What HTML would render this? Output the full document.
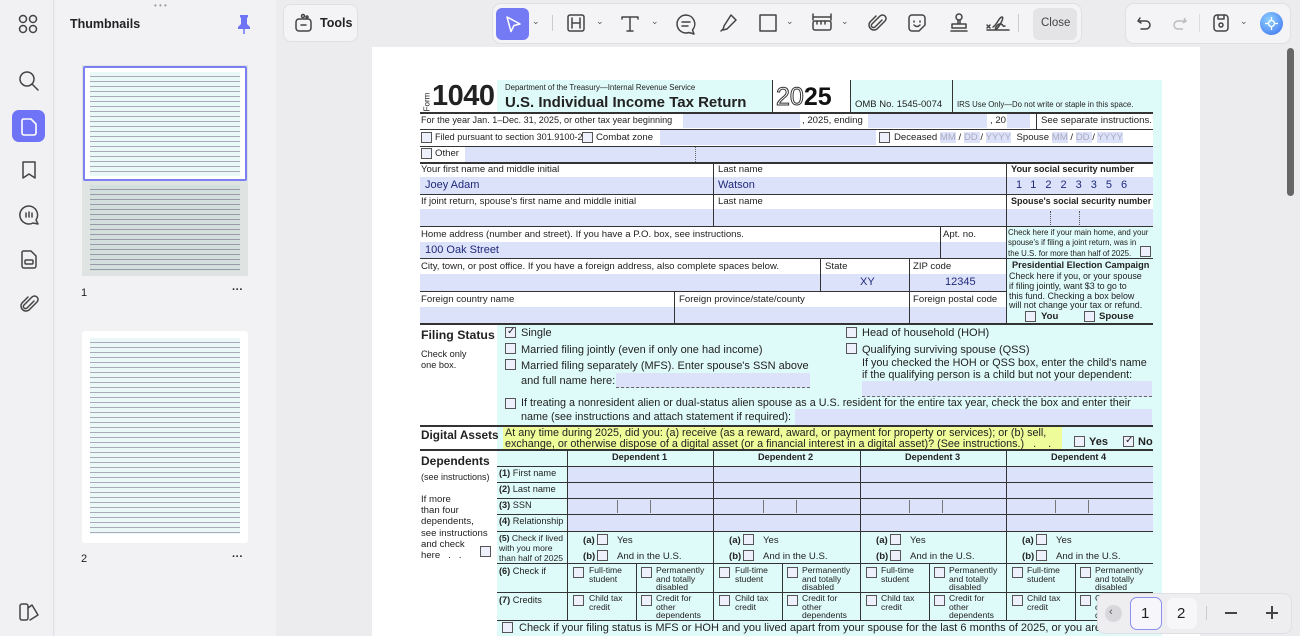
<!DOCTYPE html>
<html><head><meta charset="utf-8"><style>
*{margin:0;padding:0;box-sizing:border-box}
body{width:1300px;height:636px;overflow:hidden;background:#ececef;font-family:"Liberation Sans",Arial,sans-serif;position:relative;color:#222}
div,span{position:absolute}
.t{white-space:nowrap;font-size:9.6px;line-height:1;color:#222}
.b{font-weight:bold}
.f{background:#dde2fb}
.cy{background:#dffbf9}
.h{height:1px;background:#333}
.v{width:1px;background:#333}
.cb{width:11px;height:11px;border:1px solid #555;background:#eef0fb}
.ck::after{content:"✓";position:absolute;left:1px;top:-2px;font-size:10px;color:#222}
.val{font-size:11px;color:#1f2a7a;white-space:nowrap;line-height:1}
.fs{font-size:11px;white-space:nowrap;line-height:1}
.ic{stroke:#444;fill:none;stroke-width:1.5;stroke-linecap:round;stroke-linejoin:round}
</style></head><body>

<!-- left rail -->
<div style="left:0;top:0;width:54px;height:636px;background:#f1f1f3;border-right:1px solid #e2e2e6"></div>
<svg style="position:absolute;left:18px;top:14px" width="20" height="20" class="ic"><circle cx="5" cy="5" r="3.5"/><circle cx="15" cy="5" r="3.5"/><circle cx="5" cy="15" r="3.5"/><circle cx="15" cy="15" r="3.5"/></svg>
<svg style="position:absolute;left:18px;top:70px" width="22" height="22" class="ic"><circle cx="9" cy="9" r="7"/><path d="M14 14l6 6"/></svg>
<div style="left:12px;top:110px;width:33px;height:32px;background:#6f73f5;border-radius:7px"></div>
<svg style="position:absolute;left:19px;top:116px" width="20" height="20" fill="none" stroke="#fff" stroke-width="1.6" stroke-linejoin="round"><path d="M4 3h8l5 5v9a2 2 0 0 1-2 2H5a2 2 0 0 1-2-2V5a2 2 0 0 1 1-2z"/></svg>
<svg style="position:absolute;left:19px;top:160px" width="20" height="20" class="ic"><path d="M4 2h12v16l-6-4-6 4z"/></svg>
<svg style="position:absolute;left:17px;top:203px" width="24" height="24" class="ic"><path d="M12 3a9 9 0 1 0 4 17l5 1-2-4A9 9 0 0 0 12 3z"/><path d="M9 10v4M12 9v5M15 10v4"/></svg>
<svg style="position:absolute;left:19px;top:249px" width="20" height="20" class="ic"><path d="M4 2h8l5 5v10a2 2 0 0 1-2 2H5a2 2 0 0 1-2-2V3z"/><rect x="6" y="11" width="8" height="4" rx="1"/></svg>
<svg style="position:absolute;left:19px;top:294px" width="20" height="20" class="ic"><path d="M15 7l-7 7a2 2 0 0 1-3-3l8-8a3.5 3.5 0 0 1 5 5l-8 8a5 5 0 0 1-7-7l6-6"/></svg>
<svg style="position:absolute;left:18px;top:602px" width="22" height="20" class="ic"><rect x="2" y="2" width="8" height="16" rx="2"/><path d="M10 6l4-3 6 10-8 5"/></svg>

<!-- thumbnails panel -->
<div style="left:55px;top:0;width:221px;height:636px;background:#f2f2f4"></div>
<div class="t" style="left:154px;top:2px;color:#999;font-size:8px">• • •</div>
<div class="t b" style="left:70px;top:18px;font-size:12.5px;color:#222">Thumbnails</div>
<svg style="position:absolute;left:237px;top:14px" width="14" height="20"><path d="M3 1h8v2l-1 1v6l3 3v2H1v-2l3-3V4L3 3z" fill="#6f73f5"/><path d="M7 15v5" stroke="#6f73f5" stroke-width="1.5"/></svg>
<div style="left:82px;top:65px;width:166px;height:211px;background:#dfe4e2"></div>
<div style="left:83px;top:66px;width:164px;height:115px;background:#fff;border:2px solid #7b7ff0;border-radius:2px"></div>
<div style="left:90px;top:72px;width:150px;height:104px;background:repeating-linear-gradient(#e8f9f7 0 4px,#aab 4px 5px)"></div>
<div style="left:90px;top:185px;width:150px;height:86px;background:repeating-linear-gradient(#d3dfdd 0 4px,#99a 4px 5px)"></div>
<div class="t" style="left:81px;top:288px;font-size:11px">1</div>
<div class="t b" style="left:232px;top:285px;font-size:11px">···</div>
<div style="left:82px;top:331px;width:166px;height:212px;background:#fff;border-radius:3px"></div>
<div style="left:90px;top:338px;width:150px;height:196px;background:repeating-linear-gradient(#eaf9f7 0 4px,#aab 4px 5px)"></div>
<div class="t" style="left:81px;top:554px;font-size:11px">2</div>
<div class="t b" style="left:232px;top:552px;font-size:11px">···</div>

<!-- toolbar -->
<div style="left:277px;top:0;width:1023px;height:47px;background:#ececef"></div>
<div style="left:283px;top:4px;width:75px;height:38px;background:#f4f4f6;border:1px solid #e0e0e4;border-radius:8px"></div>
<svg style="position:absolute;left:293px;top:13px" width="22" height="20" class="ic"><rect x="3" y="6" width="15" height="12" rx="3"/><path d="M8 12h5"/><circle cx="10" cy="3" r="1.5"/><circle cx="14" cy="4" r="1"/></svg>
<div class="t b" style="left:320px;top:17px;font-size:12.5px">Tools</div>

<div style="left:492px;top:3px;width:590px;height:41px;background:#f4f4f6;border:1px solid #e0e0e4;border-radius:9px"></div>
<div style="left:496px;top:8px;width:33px;height:32px;background:#7479f4;border-radius:6px"></div>
<svg style="position:absolute;left:503px;top:14px" width="20" height="20" fill="none" stroke="#fff" stroke-width="1.5" stroke-linejoin="round"><path d="M4 3l13 7-6 1.5-3 6z"/></svg>
<div class="t" style="left:532px;top:17px;font-size:9px;color:#555">⌄</div>
<div style="left:552px;top:15px;width:1px;height:16px;background:#ccc"></div>
<svg style="position:absolute;left:566px;top:13px" width="20" height="20" class="ic"><rect x="2" y="2" width="16" height="16" rx="2"/><path d="M6 5v10M14 5v10M6 10h8"/></svg>
<div class="t" style="left:596px;top:17px;font-size:9px;color:#555">⌄</div>
<svg style="position:absolute;left:620px;top:13px" width="20" height="20" class="ic"><path d="M2 4h16M10 4v14M7 18h6M2 4v2M18 4v2"/></svg>
<div class="t" style="left:651px;top:17px;font-size:9px;color:#555">⌄</div>
<svg style="position:absolute;left:675px;top:13px" width="22" height="22" class="ic"><path d="M11 2a9 9 0 1 0 3 17.5L19 21l-1.5-4A9 9 0 0 0 11 2z"/><path d="M7 9h8M7 13h6"/></svg>
<svg style="position:absolute;left:718px;top:13px" width="20" height="20" class="ic"><path d="M13 2l5 5-9 9-4 1 1-4z"/><path d="M3 18l2-2"/></svg>
<svg style="position:absolute;left:758px;top:13px" width="20" height="20" class="ic"><rect x="2" y="2" width="16" height="16"/></svg>
<div class="t" style="left:786px;top:17px;font-size:9px;color:#555">⌄</div>
<svg style="position:absolute;left:811px;top:12px" width="22" height="22" class="ic"><path d="M2 2v6M20 2v6M2 5h18"/><rect x="2" y="9" width="18" height="9" rx="2"/><path d="M6 9v3M10 9v3M14 9v3"/></svg>
<div class="t" style="left:841px;top:17px;font-size:9px;color:#555">⌄</div>
<svg style="position:absolute;left:867px;top:13px" width="20" height="20" class="ic"><path d="M15 7l-7 7a2 2 0 0 1-3-3l8-8a3.5 3.5 0 0 1 5 5l-8 8a5 5 0 0 1-7-7l6-6"/></svg>
<svg style="position:absolute;left:907px;top:13px" width="20" height="20" class="ic"><path d="M5 2h10a3 3 0 0 1 3 3v7l-6 6H5a3 3 0 0 1-3-3V5a3 3 0 0 1 3-3z"/><path d="M7 8v1M13 8v1M7 12q3 3 6 0"/></svg>
<svg style="position:absolute;left:948px;top:12px" width="22" height="22" class="ic"><circle cx="11" cy="5" r="3"/><path d="M10 8v4M12 8v4M4 12h14v4H4zM3 19h16"/></svg>
<svg style="position:absolute;left:985px;top:13px" width="26" height="20" class="ic"><path d="M2 12l3 3M5 12l-3 3M8 14c4-2 6-10 9-10s-4 12-6 12 2-6 5-5 1 3 4 2M2 17h22"/></svg>
<div style="left:1018px;top:14px;width:1px;height:18px;background:#ccc"></div>
<div style="left:1033px;top:8px;width:44px;height:32px;background:#e4e4e7;border-radius:6px"></div>
<div class="t" style="left:1041px;top:18px;font-size:11.5px;color:#444">Close</div>

<div style="left:1125px;top:3px;width:166px;height:41px;background:#f4f4f6;border:1px solid #e0e0e4;border-radius:9px"></div>
<svg style="position:absolute;left:1136px;top:15px" width="16" height="16" class="ic"><path d="M4 3L2 6l3 2M2 6h8a4 4 0 0 1 0 8H5"/></svg>
<svg style="position:absolute;left:1172px;top:15px" width="16" height="16" fill="none" stroke="#bbb" stroke-width="1.4"><path d="M12 3l2 3-3 2M14 6H6a4 4 0 0 0 0 8h5"/></svg>
<div style="left:1199px;top:14px;width:1px;height:18px;background:#ddd"></div>
<svg style="position:absolute;left:1211px;top:13px" width="20" height="20" class="ic"><rect x="3" y="2" width="14" height="16" rx="3"/><path d="M7 2v4h6V2"/><circle cx="10" cy="12" r="2"/></svg>
<div class="t" style="left:1240px;top:17px;font-size:9px;color:#555">⌄</div>
<div style="left:1260px;top:12px;width:23px;height:23px;border-radius:50%;background:radial-gradient(circle at 40% 35%,#8fd3ff,#3a6cf0)"></div>
<svg style="position:absolute;left:1264px;top:16px" width="15" height="15" fill="none" stroke="#fff" stroke-width="1.3"><circle cx="7.5" cy="7.5" r="3"/><path d="M7.5 1v3M7.5 11v3M1 7.5h3M11 7.5h3"/></svg>

<!-- scrollbar -->
<div style="left:1287px;top:48px;width:7px;height:148px;background:#666;border-radius:4px"></div>

<!-- page -->
<div style="left:372px;top:47px;width:828px;height:589px;background:#fff"></div>
<div class="cy" style="left:497px;top:80px;width:275px;height:32px"></div>
<div class="cy" style="left:850px;top:80px;width:312px;height:32px"></div>
<div class="cy" style="left:1153px;top:80px;width:9px;height:556px"></div>
<div class="cy" style="left:1006px;top:226px;width:147px;height:98px"></div>
<div class="cy" style="left:497px;top:324px;width:656px;height:312px"></div>

<!-- header -->
<div class="t" style="left:418px;top:98px;font-size:8px;transform:rotate(-90deg)">Form</div>
<div class="t b" style="left:432px;top:82px;font-size:29px;letter-spacing:-0.5px">1040</div>
<div class="t" style="left:505px;top:84px;font-size:7.8px">Department of the Treasury—Internal Revenue Service</div>
<div class="t b" style="left:505px;top:95px;font-size:15px">U.S. Individual Income Tax Return</div>
<div class="v" style="left:772px;top:80px;height:32px"></div>
<div class="t" style="left:776px;top:85px;font-size:25px;color:#fff;-webkit-text-stroke:1px #333">20<span style="position:static;color:#111;-webkit-text-stroke:0;font-weight:bold">25</span></div>
<div class="v" style="left:850px;top:80px;height:32px"></div>
<div class="t" style="left:855px;top:100px;font-size:9.5px">OMB No. 1545-0074</div>
<div class="v" style="left:952px;top:80px;height:32px"></div>
<div class="t" style="left:957px;top:101px;font-size:7.8px">IRS Use Only—Do not write or staple in this space.</div>
<div class="h" style="left:420px;top:112px;width:733px;height:2px"></div>

<!-- row tax year -->
<div class="t" style="left:421px;top:116px;font-size:9.1px">For the year Jan. 1–Dec. 31, 2025, or other tax year beginning</div>
<div class="f" style="left:683px;top:114px;width:117px;height:14px"></div>
<div class="t" style="left:802px;top:116px">, 2025, ending</div>
<div class="f" style="left:868px;top:114px;width:119px;height:14px"></div>
<div class="t" style="left:990px;top:116px">, 20</div>
<div class="f" style="left:1007px;top:114px;width:23px;height:14px"></div>
<div class="v" style="left:1036px;top:113px;height:16px"></div>
<div class="t" style="left:1041px;top:116px">See separate instructions.</div>
<div class="h" style="left:420px;top:129px;width:733px"></div>

<div class="cb" style="left:421px;top:132px"></div>
<div class="t" style="left:435px;top:133px;font-size:9.1px">Filed pursuant to section 301.9100-2</div>
<div class="cb" style="left:582px;top:132px"></div>
<div class="t" style="left:596px;top:133px">Combat zone</div>
<div class="f" style="left:660px;top:130px;width:216px;height:15px"></div>
<div class="cb" style="left:879px;top:132px"></div>
<div class="t" style="left:894px;top:133px">Deceased <span style="position:static;color:#aab;background:#dde2fb">MM</span> / <span style="position:static;color:#aab;background:#dde2fb"> DD </span> / <span style="position:static;color:#aab;background:#dde2fb">YYYY</span>&nbsp; Spouse <span style="position:static;color:#aab;background:#dde2fb">MM</span> / <span style="position:static;color:#aab;background:#dde2fb"> DD </span> / <span style="position:static;color:#aab;background:#dde2fb">YYYY</span></div>
<div class="h" style="left:420px;top:146px;width:733px"></div>
<div class="cb" style="left:421px;top:148px"></div>
<div class="t" style="left:435px;top:149px">Other</div>
<div class="f" style="left:465px;top:147px;width:688px;height:15px"></div>
<div style="left:695px;top:147px;height:15px;border-left:1px dotted #666"></div>
<div class="h" style="left:420px;top:162px;width:733px;height:1.5px"></div>

<!-- name rows -->
<div class="t" style="left:421px;top:165px">Your first name and middle initial</div>
<div class="t" style="left:718px;top:165px">Last name</div>
<div class="t b" style="left:1011px;top:165px;font-size:9.2px">Your social security number</div>
<div class="f" style="left:420px;top:177px;width:733px;height:17px"></div>
<div class="val" style="left:425px;top:180px">Joey Adam</div>
<div class="val" style="left:718px;top:180px">Watson</div>
<div class="val" style="left:1016px;top:180px;letter-spacing:9px">11223356</div>
<div class="h" style="left:420px;top:194px;width:733px"></div>
<div class="t" style="left:421px;top:197px">If joint return, spouse's first name and middle initial</div>
<div class="t" style="left:718px;top:197px">Last name</div>
<div class="t b" style="left:1011px;top:197px;font-size:9px">Spouse's social security number</div>
<div class="f" style="left:420px;top:209px;width:733px;height:17px"></div>
<div style="left:1050px;top:211px;height:14px;border-left:1px dotted #555"></div>
<div style="left:1079px;top:211px;height:14px;border-left:1px dotted #555"></div>
<div class="v" style="left:713px;top:162px;height:64px"></div>
<div class="v" style="left:1006px;top:162px;height:162px"></div>
<div class="h" style="left:420px;top:226px;width:733px"></div>

<div class="t" style="left:421px;top:230px">Home address (number and street). If you have a P.O. box, see instructions.</div>
<div class="t" style="left:943px;top:230px">Apt. no.</div>
<div class="f" style="left:420px;top:242px;width:586px;height:16px"></div>
<div class="val" style="left:425px;top:245px">100 Oak Street</div>
<div class="v" style="left:940px;top:226px;height:32px"></div>
<div class="t" style="left:1008px;top:228px;font-size:7.9px;line-height:10.3px">Check here if your main home, and your<br>spouse's if filing a joint return, was in<br>the U.S. for more than half of 2025.</div>
<div class="cb" style="left:1140px;top:246px"></div>
<div class="h" style="left:420px;top:258px;width:733px"></div>

<div class="t" style="left:421px;top:262px">City, town, or post office. If you have a foreign address, also complete spaces below.</div>
<div class="t" style="left:825px;top:262px">State</div>
<div class="t" style="left:913px;top:262px">ZIP code</div>
<div class="f" style="left:420px;top:274px;width:586px;height:17px"></div>
<div class="val" style="left:860px;top:277px">XY</div>
<div class="val" style="left:945px;top:277px">12345</div>
<div class="v" style="left:820px;top:258px;height:33px"></div>
<div class="h" style="left:420px;top:291px;width:586px"></div>
<div class="t" style="left:421px;top:295px">Foreign country name</div>
<div class="t" style="left:679px;top:295px">Foreign province/state/county</div>
<div class="t" style="left:913px;top:295px">Foreign postal code</div>
<div class="f" style="left:420px;top:307px;width:586px;height:17px"></div>
<div class="v" style="left:674px;top:291px;height:33px"></div>
<div class="v" style="left:909px;top:258px;height:66px"></div>
<div class="t b" style="left:1012px;top:261px;font-size:9.2px">Presidential Election Campaign</div>
<div class="t" style="left:1009px;top:272px;font-size:8.9px;line-height:9.8px">Check here if you, or your spouse<br>if filing jointly, want $3 to go to<br>this fund. Checking a box below<br>will not change your tax or refund.</div>
<div class="cb" style="left:1025px;top:311px"></div>
<div class="t b" style="left:1041px;top:312px">You</div>
<div class="cb" style="left:1084px;top:311px"></div>
<div class="t b" style="left:1099px;top:312px">Spouse</div>
<div class="h" style="left:420px;top:323px;width:733px;height:2px"></div>

<!-- filing status -->
<div class="t b" style="left:421px;top:329px;font-size:12.3px">Filing Status</div>
<div class="t" style="left:421px;top:350px;font-size:9.2px">Check only</div>
<div class="t" style="left:421px;top:361px;font-size:9.2px">one box.</div>
<div class="cb ck" style="left:505px;top:327px"></div><div class="fs" style="left:521px;top:328px">Single</div>
<div class="cb" style="left:505px;top:343px"></div><div class="fs" style="left:521px;top:345px">Married filing jointly (even if only one had income)</div>
<div class="cb" style="left:505px;top:359px"></div><div class="fs" style="left:521px;top:361px">Married filing separately (MFS). Enter spouse's SSN above</div>
<div class="fs" style="left:521px;top:376px">and full name here:</div>
<div class="f" style="left:616px;top:373px;width:194px;height:15px;border-bottom:1px dashed #666"></div>
<div class="cb" style="left:505px;top:398px"></div><div class="fs" style="left:521px;top:398px;font-size:10.8px">If treating a nonresident alien or dual-status alien spouse as a U.S. resident for the entire tax year, check the box and enter their</div>
<div class="fs" style="left:521px;top:412px;font-size:10.8px">name (see instructions and attach statement if required):</div>
<div class="f" style="left:795px;top:409px;width:357px;height:16px"></div>
<div class="cb" style="left:846px;top:327px"></div><div class="fs" style="left:862px;top:328px">Head of household (HOH)</div>
<div class="cb" style="left:846px;top:343px"></div><div class="fs" style="left:862px;top:345px">Qualifying surviving spouse (QSS)</div>
<div class="fs" style="left:862px;top:358px;font-size:10.8px">If you checked the HOH or QSS box, enter the child's name</div>
<div class="fs" style="left:862px;top:370px;font-size:10.8px">if the qualifying person is a child but not your dependent:</div>
<div class="f" style="left:862px;top:381px;width:290px;height:16px;border-bottom:1px dashed #666"></div>
<div class="h" style="left:420px;top:425px;width:733px;height:1.5px"></div>

<!-- digital assets -->
<div class="t b" style="left:421px;top:430px;font-size:11.8px">Digital Assets</div>
<div style="left:503px;top:427px;width:559px;height:22px;background:#eefc9a"></div>
<div class="fs" style="left:505px;top:428px;font-size:10.8px">At any time during 2025, did you: (a) receive (as a reward, award, or payment for property or services); or (b) sell,</div>
<div class="fs" style="left:505px;top:439px;font-size:10.8px">exchange, or otherwise dispose of a digital asset (or a financial interest in a digital asset)? (See instructions.) &nbsp;&nbsp;. &nbsp;&nbsp;&nbsp;.</div>
<div class="cb" style="left:1074px;top:436px"></div><div class="t b" style="left:1089px;top:437px;font-size:11px">Yes</div>
<div class="cb ck" style="left:1123px;top:436px"></div><div class="t b" style="left:1138px;top:437px;font-size:11px">No</div>
<div class="h" style="left:420px;top:449px;width:733px;height:2px"></div>

<!-- dependents -->
<div class="t b" style="left:421px;top:455px;font-size:12px">Dependents</div>
<div class="t" style="left:421px;top:473px;font-size:9px">(see instructions)</div>
<div class="t" style="left:421px;top:494px;font-size:9.6px;line-height:11.2px">If more<br>than four<br>dependents,<br>see instructions<br>and check<br>here &nbsp;&nbsp;. &nbsp;&nbsp;.</div>
<div class="cb" style="left:480px;top:546px"></div>
<div class="f" style="left:567px;top:466px;width:586px;height:65px"></div>
<div class="t" style="left:499px;top:469px;font-size:9.2px"><b>(1)</b> First name</div>
<div class="t" style="left:499px;top:485px;font-size:9.2px"><b>(2)</b> Last name</div>
<div class="t" style="left:499px;top:501px;font-size:9.2px"><b>(3)</b> SSN</div>
<div class="t" style="left:499px;top:517px;font-size:9.2px"><b>(4)</b> Relationship</div>
<div class="t" style="left:499px;top:533px;font-size:8.6px;line-height:10px"><b>(5)</b> Check if lived<br>with you more<br>than half of 2025</div>
<div class="t" style="left:499px;top:567px;font-size:9.2px"><b>(6)</b> Check if</div>
<div class="t" style="left:499px;top:596px;font-size:9.2px"><b>(7)</b> Credits</div>
<div class="h" style="left:497px;top:466px;width:656px"></div>
<div class="h" style="left:497px;top:482px;width:656px"></div>
<div class="h" style="left:497px;top:498px;width:656px"></div>
<div class="h" style="left:497px;top:514px;width:656px"></div>
<div class="h" style="left:497px;top:531px;width:656px"></div>
<div class="h" style="left:497px;top:563px;width:656px"></div>
<div class="h" style="left:497px;top:592px;width:656px"></div>
<div class="h" style="left:497px;top:620px;width:656px"></div>

<div class="v" style="left:567px;top:450px;height:170px"></div>
<div class="v" style="left:713px;top:450px;height:170px"></div>
<div class="v" style="left:860px;top:450px;height:170px"></div>
<div class="v" style="left:1006px;top:450px;height:170px"></div>

<div class="t b" style="left:612px;top:453px;font-size:9.2px">Dependent 1</div>
<div class="t b" style="left:758px;top:453px;font-size:9.2px">Dependent 2</div>
<div class="t b" style="left:905px;top:453px;font-size:9.2px">Dependent 3</div>
<div class="t b" style="left:1051px;top:453px;font-size:9.2px">Dependent 4</div>

<!-- col 1 -->
<div class="v" style="left:617px;top:500px;height:13px;background:#777"></div><div class="v" style="left:650px;top:500px;height:13px;background:#777"></div>
<div class="t b" style="left:583px;top:536px">(a)</div><div class="cb" style="left:597px;top:534px"></div><div class="t" style="left:617px;top:536px">Yes</div>
<div class="t b" style="left:583px;top:552px">(b)</div><div class="cb" style="left:597px;top:550px"></div><div class="t" style="left:617px;top:552px">And in the U.S.</div>
<div class="v" style="left:636px;top:563px;height:57px"></div>
<div class="cb" style="left:573px;top:567px"></div><div class="t" style="left:589px;top:566px;font-size:8.6px;line-height:8.5px">Full-time<br>student</div>
<div class="cb" style="left:641px;top:567px"></div><div class="t" style="left:656px;top:566px;font-size:8.6px;line-height:8.5px">Permanently<br>and totally<br>disabled</div>
<div class="cb" style="left:573px;top:595px"></div><div class="t" style="left:589px;top:594px;font-size:8.6px;line-height:8.5px">Child tax<br>credit</div>
<div class="cb" style="left:641px;top:595px"></div><div class="t" style="left:656px;top:594px;font-size:8.6px;line-height:8.5px">Credit for<br>other<br>dependents</div>
<!-- col 2 -->
<div class="v" style="left:763px;top:500px;height:13px;background:#777"></div><div class="v" style="left:796px;top:500px;height:13px;background:#777"></div>
<div class="t b" style="left:729px;top:536px">(a)</div><div class="cb" style="left:743px;top:534px"></div><div class="t" style="left:763px;top:536px">Yes</div>
<div class="t b" style="left:729px;top:552px">(b)</div><div class="cb" style="left:743px;top:550px"></div><div class="t" style="left:763px;top:552px">And in the U.S.</div>
<div class="v" style="left:782px;top:563px;height:57px"></div>
<div class="cb" style="left:719px;top:567px"></div><div class="t" style="left:735px;top:566px;font-size:8.6px;line-height:8.5px">Full-time<br>student</div>
<div class="cb" style="left:787px;top:567px"></div><div class="t" style="left:802px;top:566px;font-size:8.6px;line-height:8.5px">Permanently<br>and totally<br>disabled</div>
<div class="cb" style="left:719px;top:595px"></div><div class="t" style="left:735px;top:594px;font-size:8.6px;line-height:8.5px">Child tax<br>credit</div>
<div class="cb" style="left:787px;top:595px"></div><div class="t" style="left:802px;top:594px;font-size:8.6px;line-height:8.5px">Credit for<br>other<br>dependents</div>
<!-- col 3 -->
<div class="v" style="left:909px;top:500px;height:13px;background:#777"></div><div class="v" style="left:942px;top:500px;height:13px;background:#777"></div>
<div class="t b" style="left:876px;top:536px">(a)</div><div class="cb" style="left:890px;top:534px"></div><div class="t" style="left:910px;top:536px">Yes</div>
<div class="t b" style="left:876px;top:552px">(b)</div><div class="cb" style="left:890px;top:550px"></div><div class="t" style="left:910px;top:552px">And in the U.S.</div>
<div class="v" style="left:929px;top:563px;height:57px"></div>
<div class="cb" style="left:866px;top:567px"></div><div class="t" style="left:881px;top:566px;font-size:8.6px;line-height:8.5px">Full-time<br>student</div>
<div class="cb" style="left:934px;top:567px"></div><div class="t" style="left:949px;top:566px;font-size:8.6px;line-height:8.5px">Permanently<br>and totally<br>disabled</div>
<div class="cb" style="left:866px;top:595px"></div><div class="t" style="left:881px;top:594px;font-size:8.6px;line-height:8.5px">Child tax<br>credit</div>
<div class="cb" style="left:934px;top:595px"></div><div class="t" style="left:949px;top:594px;font-size:8.6px;line-height:8.5px">Credit for<br>other<br>dependents</div>
<!-- col 4 -->
<div class="v" style="left:1055px;top:500px;height:13px;background:#777"></div><div class="v" style="left:1088px;top:500px;height:13px;background:#777"></div>
<div class="t b" style="left:1022px;top:536px">(a)</div><div class="cb" style="left:1036px;top:534px"></div><div class="t" style="left:1056px;top:536px">Yes</div>
<div class="t b" style="left:1022px;top:552px">(b)</div><div class="cb" style="left:1036px;top:550px"></div><div class="t" style="left:1056px;top:552px">And in the U.S.</div>
<div class="v" style="left:1075px;top:563px;height:57px"></div>
<div class="cb" style="left:1012px;top:567px"></div><div class="t" style="left:1027px;top:566px;font-size:8.6px;line-height:8.5px">Full-time<br>student</div>
<div class="cb" style="left:1080px;top:567px"></div><div class="t" style="left:1095px;top:566px;font-size:8.6px;line-height:8.5px">Permanently<br>and totally<br>disabled</div>
<div class="cb" style="left:1012px;top:595px"></div><div class="t" style="left:1027px;top:594px;font-size:8.6px;line-height:8.5px">Child tax<br>credit</div>
<div class="cb" style="left:1080px;top:595px"></div><div class="t" style="left:1095px;top:594px;font-size:8.6px;line-height:8.5px">Credit for<br>other<br>dependents</div>

<div class="cb" style="left:502px;top:622px"></div>
<div class="fs" style="left:519px;top:623px">Check if your filing status is MFS or HOH and you lived apart from your spouse for the last 6 months of 2025, or you are</div>

<!-- page nav -->
<div style="left:1097px;top:593px;width:195px;height:41px;background:#eeeef0;border:1px solid #e0e0e4;border-radius:8px"></div>
<div style="left:1105px;top:605px;width:17px;height:17px;border-radius:50%;background:#d8d8dc"></div>
<div class="t" style="left:1109px;top:607px;font-size:11px;color:#555">‹</div>
<div style="left:1130px;top:597px;width:32px;height:33px;border:1.5px solid #8b8ff0;border-radius:7px;background:#f7f7fb"></div>
<div class="t" style="left:1141px;top:606px;font-size:15px;color:#222">1</div>
<div style="left:1167px;top:598px;width:30px;height:31px;border-radius:7px;background:#f7f7f9"></div>
<div class="t" style="left:1177px;top:606px;font-size:15px;color:#222">2</div>
<div style="left:1206px;top:606px;width:1px;height:14px;background:#ccc"></div>
<div style="left:1225px;top:612px;width:12px;height:1.5px;background:#444"></div>
<div style="left:1266px;top:612px;width:12px;height:1.5px;background:#444"></div>
<div style="left:1271px;top:606px;width:1.5px;height:13px;background:#444"></div>
</body></html>
